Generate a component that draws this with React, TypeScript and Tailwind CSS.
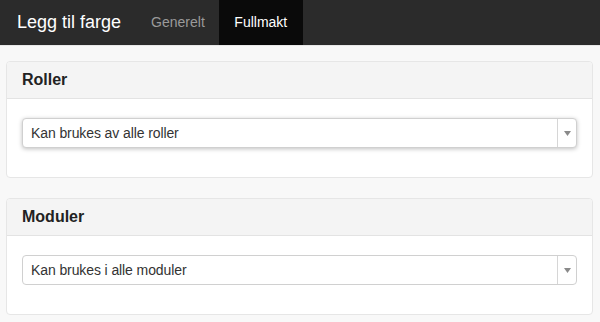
import React from "react";

function Select({ label, shadow }: { label: string; shadow?: boolean }) {
  return (
    <div
      className={
        "flex h-[30px] items-stretch rounded-[4px] border border-[#d0d0d0] bg-white " +
        (shadow ? "shadow-[0_1px_4px_rgba(0,0,0,0.25)]" : "")
      }
    >
      <div className="flex flex-1 items-center pl-[8px] text-[14px] tracking-[-0.1px] text-[#333]">{label}</div>
      <div className="flex w-[19px] items-center justify-center border-l border-[#d6d6d6]">
        <svg width="7" height="5" viewBox="0 0 7 5">
          <path d="M0 0 L7 0 L3.5 5 Z" fill="#8a8a8a" />
        </svg>
      </div>
    </div>
  );
}

function Panel({ title, label, shadow }: { title: string; label: string; shadow?: boolean }) {
  return (
    <div className="mx-[6px] mr-[7px] rounded-[4px] border border-[#e6e6e6] bg-white">
      <div className="flex h-[37px] items-center rounded-t-[4px] border-b border-[#e3e3e3] bg-[#f4f4f4] px-[15px] text-[16px] font-bold text-[#222]">
        {title}
      </div>
      <div className="px-[15px] pb-[29px] pt-[19px]">
        <Select label={label} shadow={shadow} />
      </div>
    </div>
  );
}

export default function App() {
  return (
    <div
      className="h-[322px] w-[600px] overflow-hidden bg-[#f8f8f8]"
      style={{ fontFamily: '"Liberation Sans", Arial, sans-serif' }}
    >
      <div className="flex h-[45px] items-stretch bg-[#2b2b2b]">
        <div className="flex items-center pl-[17px] pr-[26px] text-[18px] text-white">Legg til farge</div>
        <div className="flex items-center px-[4px] text-[14px] text-[#9a9a9a]">Generelt</div>
        <div className="ml-[10px] flex w-[84px] items-center justify-center bg-[#0a0a0a] text-[14px] text-white">
          Fullmakt
        </div>
      </div>
      <div className="h-px bg-[#e8e8e8]" />
      <div className="flex flex-col gap-[20px] pt-[15px]">
        <Panel title="Roller" label="Kan brukes av alle roller" shadow />
        <Panel title="Moduler" label="Kan brukes i alle moduler" />
      </div>
    </div>
  );
}
